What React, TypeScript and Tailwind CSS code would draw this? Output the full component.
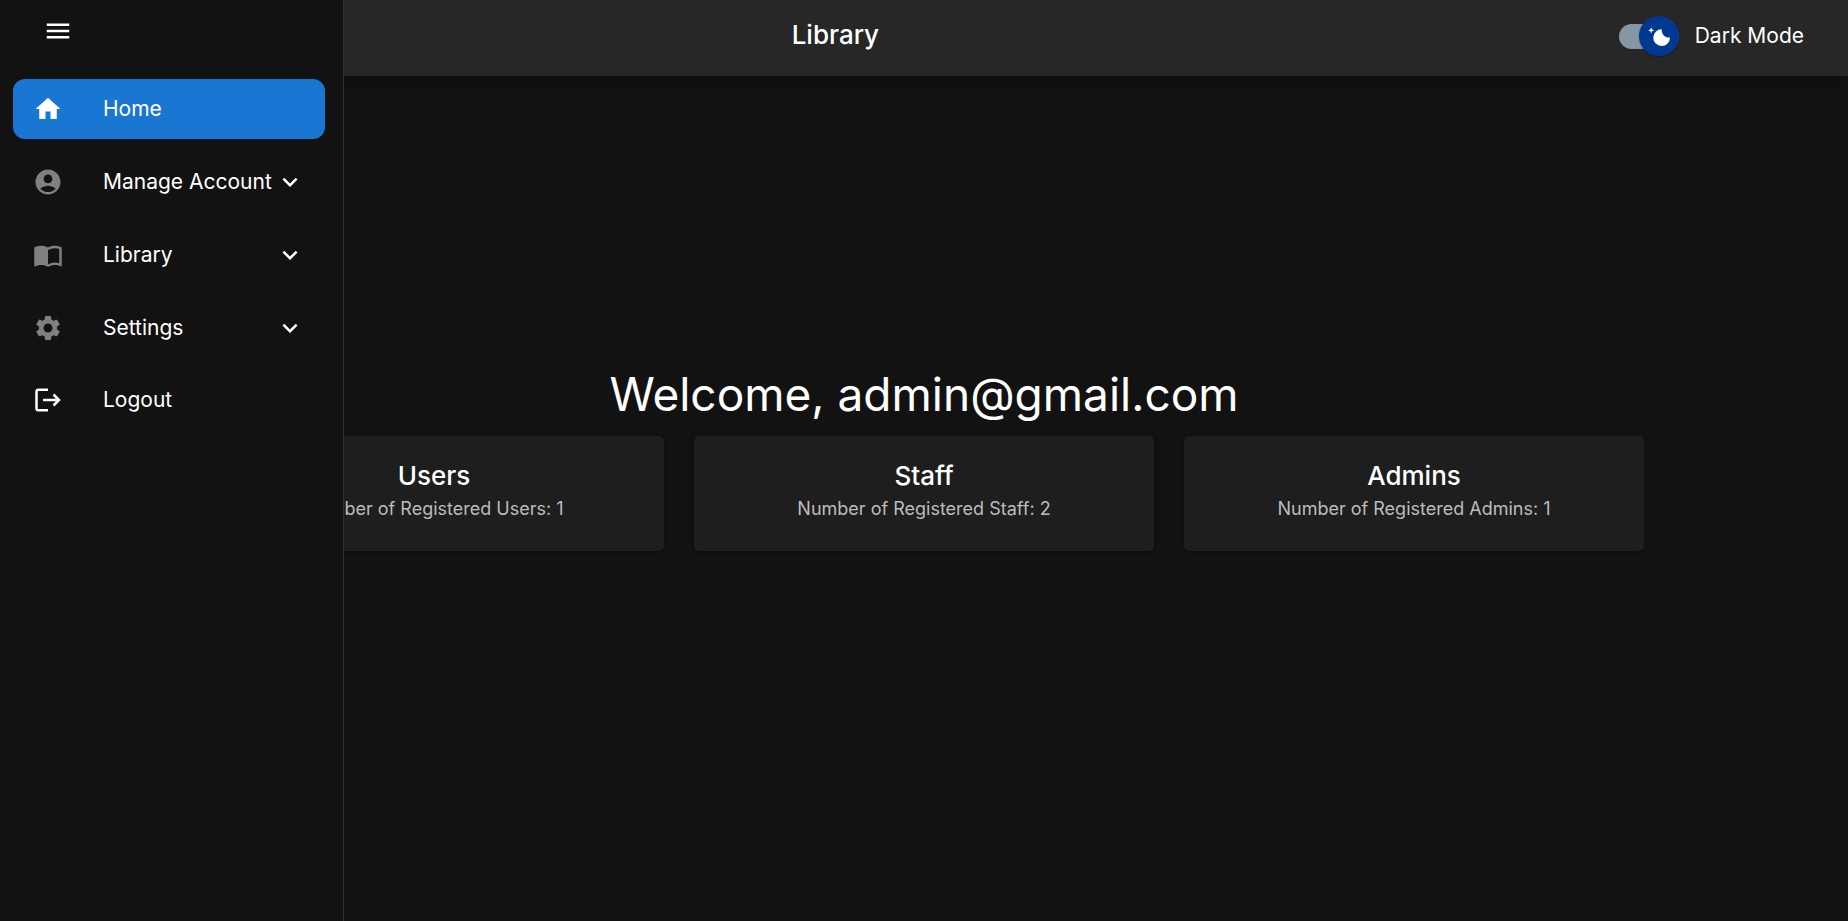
import { useState } from "react";
import type { ReactNode } from "react";
import {
  MdAccountCircle,
  MdExpandMore,
  MdHome,
  MdImportContacts,
  MdMenu,
  MdSettings,
} from "react-icons/md";

type NavItem = {
  label: string;
  icon: ReactNode;
  active?: boolean;
  expandable?: boolean;
};

function LogoutIcon() {
  return (
    <svg viewBox="0 0 30 30" className="size-[30px]" fill="none" stroke="currentColor" aria-hidden="true">
      <path d="M15 4.800H5.300q-1.800 0-1.800 1.800v16.800q0 1.800 1.800 1.800H15" strokeWidth="2.500" />
      <path d="M10 15h16M20.500 9.500l5.500 5.500-5.500 5.500" strokeWidth="2.500" />
    </svg>
  );
}

const navItems: NavItem[] = [
  { label: "Home", icon: <MdHome className="size-[30px] text-white" />, active: true },
  { label: "Manage Account", icon: <MdAccountCircle className="size-[30px]" />, expandable: true },
  { label: "Library", icon: <MdImportContacts className="size-[30px]" />, expandable: true },
  { label: "Settings", icon: <MdSettings className="size-[30px]" />, expandable: true },
  { label: "Logout", icon: <span className="text-white"><LogoutIcon /></span> },
];

const cards = [
  { title: "Users", text: "Number of Registered Users: 1" },
  { title: "Staff", text: "Number of Registered Staff: 2" },
  { title: "Admins", text: "Number of Registered Admins: 1" },
];

function Sidebar() {
  return (
    <aside className="fixed inset-y-0 left-0 z-20 w-[344px] border-r border-[#2f2f2f] bg-[#121212]">
      <button type="button" aria-label="Toggle menu" className="mt-4 ml-[43px] block text-white">
        <MdMenu className="size-[30px]" />
      </button>
      <nav className="mt-[33px] mr-[18px] ml-[13px] flex flex-col gap-3">
        {navItems.map((item) => {
          const look = item.active ? "bg-[#1976d2]" : "";
          const height = item.expandable ? "h-[61px]" : "h-[60px]";
          const row = (
            <>
              <span className="flex w-[70px] shrink-0 text-[#808080]">{item.icon}</span>
              <span className="whitespace-nowrap">{item.label}</span>
              {item.expandable && <MdExpandMore className="ml-auto size-[30px] shrink-0" />}
            </>
          );
          const cls = `flex w-full items-center rounded-[12px] px-5 text-left text-[21px] text-white ${height} ${look}`;
          return item.expandable ? (
            <button key={item.label} type="button" className={cls}>{row}</button>
          ) : (
            <a key={item.label} href="#" className={cls}>{row}</a>
          );
        })}
      </nav>
    </aside>
  );
}

function ModeSwitch() {
  const [dark, setDark] = useState(true);
  return (
    <label className="flex cursor-pointer items-center gap-4">
      <span className="relative flex h-10 w-[60px] items-center">
        <input
          type="checkbox"
          role="switch"
          checked={dark}
          onChange={(e) => setDark(e.target.checked)}
          className="peer h-[25px] w-full appearance-none rounded-full bg-[#8796a5]"
        />
        <span className="pointer-events-none absolute inset-y-0 left-0 flex w-10 items-center justify-center rounded-full bg-[#003892] shadow-[0_1px_2px_rgba(0,0,0,0.3)] peer-checked:left-5">
          <svg viewBox="0 0 20 20" className="size-[25px]" fill="#fff" aria-hidden="true">
            <path d="M4.2 2.5l-.7 1.8-1.8.7 1.8.7.6 1.9.6-1.9L6.7 5l-1.9-.7-.6-1.8zm15 8.3a6.7 6.7 0 11-6.6-6.6 5.8 5.8 0 006.6 6.6z" />
          </svg>
        </span>
      </span>
      <span className="text-[21px]">Dark Mode</span>
    </label>
  );
}

export default function App() {
  return (
    <div className="flex min-h-screen flex-col bg-[#121212] font-['Inter','Open_Sans',sans-serif] text-white">
      <Sidebar />
      <header className="flex h-[76px] items-start bg-[#272727] pr-11 pl-[52px] shadow-[0_4px_10px_rgba(0,0,0,0.25)]">
        <h1 className="grow pt-4 text-center text-[26px] leading-[38px] font-medium">Library</h1>
        <div className="pt-4">
          <ModeSwitch />
        </div>
      </header>
      <main className="flex grow flex-col items-center justify-center pb-20">
        <h2 className="text-[46px] leading-[56px]">Welcome, admin@gmail.com</h2>
        <div className="mt-[14px] grid w-full max-w-[1440px] grid-cols-3 gap-[30px]">
          {cards.map((card) => (
            <section
              key={card.title}
              className="flex h-[115px] flex-col items-center rounded-[5px] bg-[#1e1e1e] pt-5 shadow-[0_1px_3px_rgba(0,0,0,0.4)]"
            >
              <h3 className="text-[26px] leading-10 font-medium">{card.title}</h3>
              <p className="text-[18px] leading-[25px] text-[#bcbcbc]">{card.text}</p>
            </section>
          ))}
        </div>
      </main>
    </div>
  );
}
